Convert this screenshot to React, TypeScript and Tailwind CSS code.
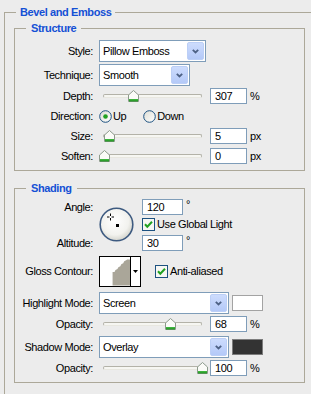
import React from 'react';

// Photoshop layer style panel: Bevel and Emboss

function Chevron() {
  return (
    <svg width="7" height="5" viewBox="0 0 7 5">
      <path d="M0.8 0.8 L3.5 3.5 L6.2 0.8" fill="none" stroke="#4d6185" strokeWidth="1.8" />
    </svg>
  );
}

function Select({ value, w }: { value: string; w: string }) {
  return (
    <div className={`${w} h-[22px] border border-[#7f9db9] bg-white flex items-center pl-[3px] pr-[1px]`}>
      <span className="flex-1">{value}</span>
      <span className="w-[17px] h-[18px] rounded-[2px] border border-[#bccff6] bg-gradient-to-b from-[#cddcfd] to-[#b4c9f8] flex items-center justify-center">
        <Chevron />
      </span>
    </div>
  );
}

function NumBox({ value, w = 'w-[37px]' }: { value: string; w?: string }) {
  return (
    <div className={`${w} h-[16px] border border-[#7f9db9] bg-white flex items-center pl-[4px]`}>
      {value}
    </div>
  );
}

function Thumb() {
  return (
    <svg width="11" height="12" viewBox="0 0 11 12">
      <path d="M5.5 0.5 L10.5 5 L10.5 11.5 L0.5 11.5 L0.5 5 Z" fill="#fbfbf8" stroke="#8c9a8c" />
      <rect x="1" y="9" width="9" height="2" fill="#3cb43c" />
      <rect x="1" y="10.5" width="9" height="1" fill="#1e8c1e" />
    </svg>
  );
}

function Slider({ pos }: { pos: number }) {
  return (
    <div className="relative w-[107px] h-[16px] flex items-center px-[4px]">
      <div className="w-full h-[4px] rounded-full border border-[#b3b2a8] border-b-[#e8e7e0] bg-[#f6f6f2]" />
      <div className="absolute top-[2px]" style={{ left: pos }}>
        <Thumb />
      </div>
    </div>
  );
}

function Radio({ checked }: { checked?: boolean }) {
  return (
    <svg width="13" height="13" viewBox="0 0 13 13">
      <defs>
        <linearGradient id="rg" x1="0" y1="0" x2="1" y2="1">
          <stop offset="0" stopColor="#dcdcd4" />
          <stop offset="1" stopColor="#ffffff" />
        </linearGradient>
      </defs>
      <circle cx="6.5" cy="6.5" r="5.8" fill="url(#rg)" stroke="#1c5180" strokeWidth="1" />
      {checked && <circle cx="6.5" cy="6.5" r="2.3" fill="#21a121" />}
    </svg>
  );
}

function Check() {
  return (
    <svg width="13" height="13" viewBox="0 0 13 13">
      <rect x="0.5" y="0.5" width="12" height="12" fill="#f7f7f3" stroke="#1c5180" />
      <path d="M3 6.3 L5.3 8.8 L10 3.8" fill="none" stroke="#21a121" strokeWidth="2" />
    </svg>
  );
}

function Label({ children }: { children: React.ReactNode }) {
  return <span className="w-[78px] shrink-0 text-right mr-[6px]">{children}</span>;
}

function SliderRow({ label, pos, value, unit, className = '' }: { label: string; pos: number; value: string; unit: string; className?: string }) {
  return (
    <div className={`flex items-center h-[16px] ${className}`}>
      <Label>{label}</Label>
      <Slider pos={pos} />
      <span className="ml-[4px]"><NumBox value={value} /></span>
      <span className="ml-[3px]">{unit}</span>
    </div>
  );
}

function AngleDial() {
  return (
    <svg width="35" height="35" viewBox="0 0 35 35">
      <defs>
        <radialGradient id="dial" cx="0.45" cy="0.4" r="0.6">
          <stop offset="0" stopColor="#ffffff" />
          <stop offset="0.7" stopColor="#f2f2ee" />
          <stop offset="1" stopColor="#d4d4cc" />
        </radialGradient>
      </defs>
      <circle cx="17.5" cy="17.5" r="16.3" fill="url(#dial)" stroke="#3d5a80" strokeWidth="1.6" />
      <path d="M11.5 6.5 V13.5 M8 10 H15" stroke="#000" strokeWidth="1" />
      <rect x="10.5" y="9" width="2" height="2" fill="#fff" />
      <rect x="17" y="17" width="3" height="3" fill="#000" />
    </svg>
  );
}

function Contour() {
  return (
    <div className="w-[42px] h-[31px] border border-black bg-white flex">
      <svg width="31" height="29" viewBox="0 0 31 29" className="border-r border-black">
        <path d="M13 29 V15 L15 15 L16 13 L18 12 L19 10 L21 9 L22 7 L24 6 L25 4 L27 3 L28 2 L31 2 V29 Z" fill="#aaa699" />
      </svg>
      <div className="flex-1 flex items-center justify-center">
        <svg width="5" height="3" viewBox="0 0 5 3">
          <path d="M0 0 H5 L2.5 3 Z" fill="#000" />
        </svg>
      </div>
    </div>
  );
}

export default function App() {
  return (
    <div className="w-[311px] h-[394px] overflow-hidden bg-[#ececec] text-black text-[11px] leading-[13px] tracking-[-0.4px] font-['Liberation_Sans',Arial,sans-serif] pt-[6px]">
      <fieldset className="ml-[4px] w-[330px] border border-[#aca899] pb-[20px]">
        <legend className="ml-[11px] px-[4px] font-bold text-[#1450d5]">Bevel and Emboss</legend>

        {/* Structure */}
        <fieldset className="ml-[9px] mt-[3px] w-[291px] border border-[#aca899] pt-[5px] pb-[6px]">
          <legend className="ml-[11px] px-[5px] font-bold text-[#1450d5]">Structure</legend>
          <div className="flex items-center h-[22px]">
            <Label>Style:</Label>
            <Select value="Pillow Emboss" w="w-[107px]" />
          </div>
          <div className="flex items-center h-[22px] mt-[2px]">
            <Label>Technique:</Label>
            <Select value="Smooth" w="w-[91px]" />
          </div>
          <SliderRow label="Depth:" pos={29} value="307" unit="%" className="mt-[2px]" />
          <div className="flex items-center h-[24px]">
            <Label>Direction:</Label>
            <Radio checked />
            <span className="ml-[1px]">Up</span>
            <span className="ml-[17px] flex items-center"><Radio /></span>
            <span className="ml-[1px]">Down</span>
          </div>
          <SliderRow label="Size:" pos={5} value="5" unit="px" />
          <SliderRow label="Soften:" pos={0} value="0" unit="px" className="mt-[4px]" />
        </fieldset>

        {/* Shading */}
        <fieldset className="ml-[9px] mt-[11px] w-[291px] border border-[#aca899] pt-[4px] pb-[6px]">
          <legend className="ml-[11px] px-[5px] font-bold text-[#1450d5]">Shading</legend>
          <div className="flex">
            <div className="w-[78px] shrink-0 mr-[6px] flex flex-col justify-between text-right">
              <span className="h-[16px] flex items-center justify-end">Angle:</span>
              <span className="h-[16px] flex items-center justify-end">Altitude:</span>
            </div>
            <div className="self-center mt-[-1px]">
              <AngleDial />
            </div>
            <div className="ml-[8px] flex flex-col">
              <div className="flex items-start h-[16px]">
                <NumBox value="120" w="w-[41px]" />
                <span className="ml-[3px] leading-[10px]">°</span>
              </div>
              <div className="flex items-center mt-[3px] h-[13px]">
                <Check />
                <span className="ml-[2px]">Use Global Light</span>
              </div>
              <div className="flex items-start h-[16px] mt-[4px]">
                <NumBox value="30" w="w-[41px]" />
                <span className="ml-[3px] leading-[10px]">°</span>
              </div>
            </div>
          </div>
          <div className="flex items-center mt-[5px]">
            <Label>Gloss Contour:</Label>
            <Contour />
            <span className="ml-[14px] flex items-center"><Check /></span>
            <span className="ml-[2px]">Anti-aliased</span>
          </div>
          <div className="flex items-center h-[22px] mt-[5px]">
            <Label>Highlight Mode:</Label>
            <Select value="Screen" w="w-[130px]" />
            <div className="ml-[3px] w-[31px] h-[16px] border border-[#a3a3a3] bg-white" />
          </div>
          <SliderRow label="Opacity:" pos={66} value="68" unit="%" className="mt-[2px]" />
          <div className="flex items-center h-[22px] mt-[4px]">
            <Label>Shadow Mode:</Label>
            <Select value="Overlay" w="w-[130px]" />
            <div className="ml-[3px] w-[31px] h-[16px] border border-[#7c7c7c] bg-[#333333]" />
          </div>
          <SliderRow label="Opacity:" pos={98} value="100" unit="%" className="mt-[2px]" />
        </fieldset>
      </fieldset>
    </div>
  );
}
